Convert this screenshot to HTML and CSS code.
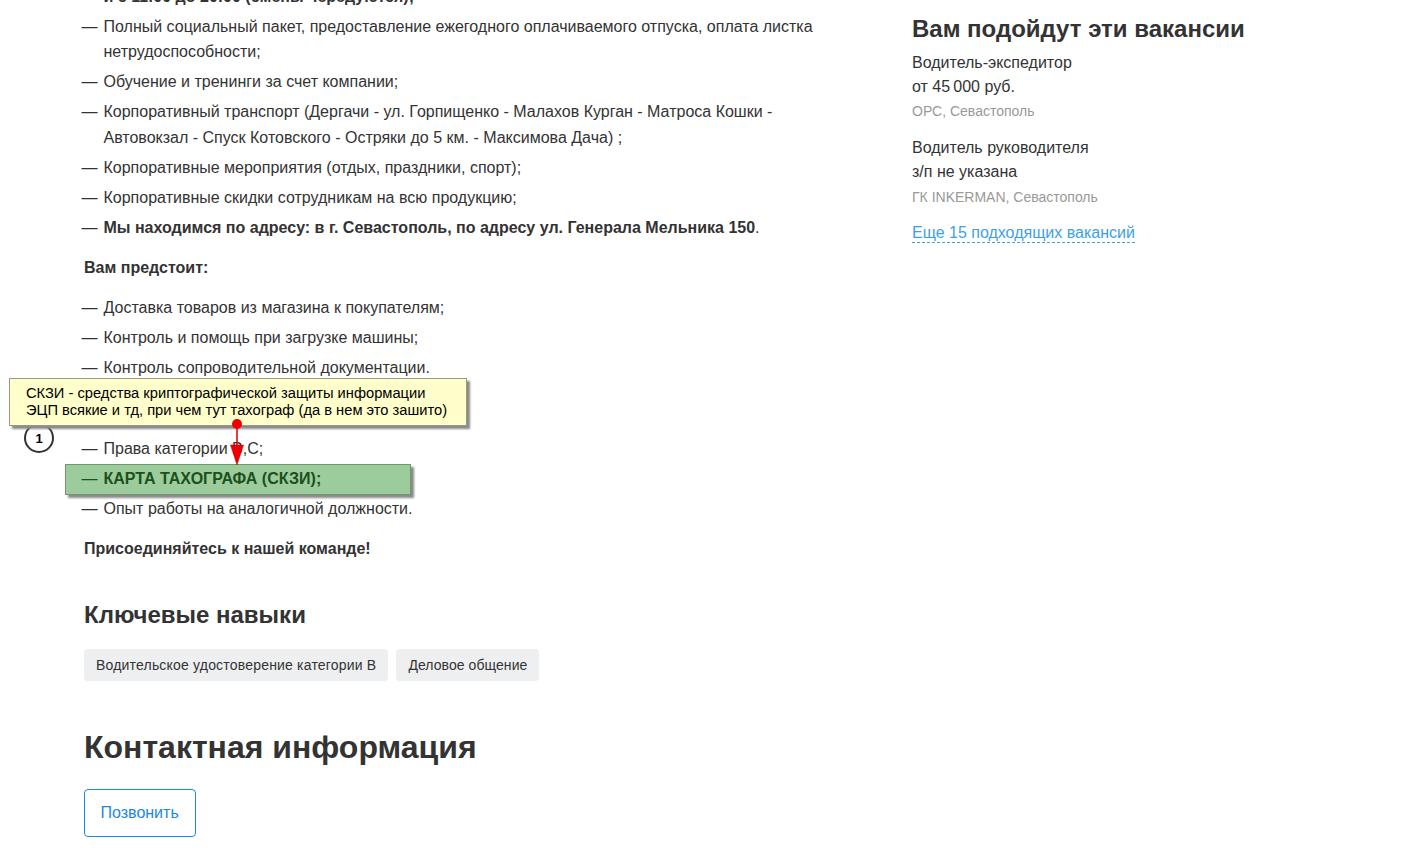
FILE: index.html
```html
<!DOCTYPE html>
<html>
<head>
    <title>Вакансия</title>
    <link rel="stylesheet" href="styles.css">
</head>
<body>
    <div class="page">
        <div class="main">
            <ul class="list">
                <li class="plain"><b>и с 11:00 до 20:00 (смены чередуются);</b></li>
                <li>Полный социальный пакет, предоставление ежегодного оплачиваемого отпуска, оплата листка нетрудоспособности;</li>
                <li>Обучение и тренинги за счет компании;</li>
                <li>Корпоративный транспорт (Дергачи - ул. Горпищенко - Малахов Курган - Матроса Кошки - Автовокзал - Спуск Котовского - Остряки до 5 км. - Максимова Дача) ;</li>
                <li>Корпоративные мероприятия (отдых, праздники, спорт);</li>
                <li>Корпоративные скидки сотрудникам на всю продукцию;</li>
                <li><b>Мы находимся по адресу: в г. Севастополь, по адресу ул. Генерала Мельника 150</b>.</li>
            </ul>
            <p class="para"><b>Вам предстоит:</b></p>
            <ul class="list">
                <li>Доставка товаров из магазина к покупателям;</li>
                <li>Контроль и помощь при загрузке машины;</li>
                <li>Контроль сопроводительной документации.</li>
            </ul>
            <ul class="list under-note">
                <li>Права категории В,С;</li>
                <li><b>КАРТА ТАХОГРАФА (СКЗИ);</b></li>
                <li>Опыт работы на аналогичной должности.</li>
            </ul>
            <p class="para"><b>Присоединяйтесь к нашей команде!</b></p>

            <h2 class="skills-title">Ключевые навыки</h2>
            <div class="tags">
                <span class="tag">Водительское удостоверение категории B</span>
                <span class="tag">Деловое общение</span>
            </div>

            <h1 class="contacts-title">Контактная информация</h1>
            <a class="call-btn" href="#">Позвонить</a>
        </div>

        <div class="side">
            <h2 class="side-title">Вам подойдут эти вакансии</h2>
            <div class="job">
                <div>Водитель-экспедитор</div>
                <div>от 45&#8201;000 руб.</div>
                <div class="company">ОРС, Севастополь</div>
            </div>
            <div class="job">
                <div>Водитель руководителя</div>
                <div>з/п не указана</div>
                <div class="company">ГК INKERMAN, Севастополь</div>
            </div>
            <a class="more" href="#">Еще 15 подходящих вакансий</a>
        </div>
    </div>

    <!-- annotations on top of the page -->
    <div class="mark"></div>
    <div class="step">1</div>
    <div class="note">
        СКЗИ - средства криптографической защиты информации<br>
        ЭЦП всякие и тд, при чем тут тахограф (да в нем это зашито)
    </div>
    <svg class="arrow" width="24" height="52" viewBox="0 0 24 52">
        <line x1="12" y1="6" x2="12" y2="30" stroke="#d80000" stroke-width="1.5"/>
        <circle cx="12" cy="6" r="5" fill="#f00000"/>
        <polygon points="5.5,27 18.5,27 12,47" fill="#f00000" stroke="#b00000" stroke-width="0.5"/>
    </svg>
</body>
</html>
```

FILE: styles.css
```css
html, body {
    height: 100%;
    overflow: hidden;
}
body {
    position: relative;
    margin: 0;
    background: #fff;
    color: #333;
    font-family: "Liberation Sans", Arial, sans-serif;
    font-size: 16px;
    line-height: 25.6px;
}

.page {
    display: grid;
    grid-template-columns: 744px 1fr;
    column-gap: 84px;
    margin-top: -16.4px;
    padding-left: 84px;
}

.list {
    margin: 0;
    padding: 0;
    list-style: none;
}
.list li {
    position: relative;
    padding-left: 19.5px;
    margin-bottom: 4.4px;
}
.list li::before {
    content: "—";
    position: absolute;
    left: -2.5px;
    font-weight: normal;
}
.list li.plain::before {
    content: "";
}
.under-note {
    margin-top: 55.4px;
}

.para {
    margin: 14.4px 0;
}

.skills-title {
    margin: 39px 0 0;
    font-size: 24px;
    line-height: 30px;
}
.tags {
    display: flex;
    gap: 8px;
    margin-top: 19px;
}
.tag {
    padding: 3px 12px;
    border-radius: 4px;
    background: #eeeff1;
    font-size: 14px;
    line-height: 26px;
    letter-spacing: 0.19px;
}
.tag + .tag {
    letter-spacing: 0.07px;
}

.contacts-title {
    margin: 46px 0 0;
    font-size: 32px;
    line-height: 40px;
}
.call-btn {
    display: inline-block;
    margin-top: 22px;
    padding: 10px 16.5px 10px 15.5px;
    border: 1px solid #1a88e6;
    border-radius: 4px;
    color: #1a88e6;
    line-height: 26px;
    text-decoration: none;
}

.side-title {
    margin: 30px 0 0;
    font-size: 24px;
    line-height: 30px;
}
.job {
    margin-top: 7px;
    line-height: 24.4px;
}
.job + .job {
    margin-top: 12px;
}
.company {
    color: #999;
    font-size: 14px;
}
.more {
    display: inline-block;
    margin-top: 13.9px;
    color: #3d9fea;
    line-height: 19px;
    text-decoration: none;
    border-bottom: 1px dashed #3d9fea;
}

.note {
    position: absolute;
    left: 9px;
    top: 378px;
    width: 440px;
    height: 40px;
    padding: 6px 0 0 16px;
    border: 1px solid #9a9a80;
    background: #ffffcc;
    box-shadow: 3px 3px 2px #8a8a8a;
    color: #000;
    font-size: 14.7px;
    line-height: 17px;
}
.step {
    position: absolute;
    left: 24px;
    top: 423px;
    width: 26px;
    height: 26px;
    border: 2px solid #333;
    border-radius: 50%;
    background: #fff;
    color: #000;
    font-size: 13px;
    font-weight: bold;
    line-height: 28px;
    text-align: center;
}
.mark {
    position: absolute;
    left: 65px;
    top: 464px;
    width: 344px;
    height: 29px;
    border: 1px solid #6f9a6f;
    background: rgba(0, 124, 0, 0.39);
    box-shadow: 3px 3px 2px #8a8a8a;
}
.arrow {
    position: absolute;
    left: 225px;
    top: 418px;
}
```
